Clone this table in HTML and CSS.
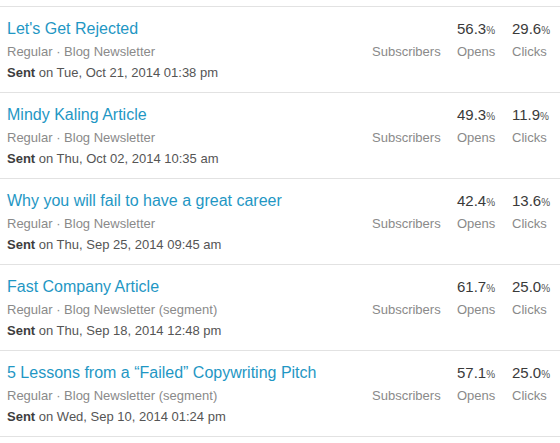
FILE: index.html
```html
<!DOCTYPE html>
<html>
<head>
<meta charset="utf-8">
<link rel="stylesheet" href="styles.css">
</head>
<body>
<ul class="campaigns">
  <li class="campaign">
    <div class="info">
      <div class="title">Let's Get Rejected</div>
      <div class="meta">Regular · Blog Newsletter</div>
      <div class="sent"><b>Sent</b> on Tue, Oct 21, 2014 01:38 pm</div>
    </div>
    <div class="stats">
      <div class="stat"><div class="num">&nbsp;</div><div class="label">Subscribers</div></div>
      <div class="stat"><div class="num">56.3<span class="pct">%</span></div><div class="label">Opens</div></div>
      <div class="stat"><div class="num">29.6<span class="pct">%</span></div><div class="label">Clicks</div></div>
    </div>
  </li>
  <li class="campaign">
    <div class="info">
      <div class="title">Mindy Kaling Article</div>
      <div class="meta">Regular · Blog Newsletter</div>
      <div class="sent"><b>Sent</b> on Thu, Oct 02, 2014 10:35 am</div>
    </div>
    <div class="stats">
      <div class="stat"><div class="num">&nbsp;</div><div class="label">Subscribers</div></div>
      <div class="stat"><div class="num">49.3<span class="pct">%</span></div><div class="label">Opens</div></div>
      <div class="stat"><div class="num">11.9<span class="pct">%</span></div><div class="label">Clicks</div></div>
    </div>
  </li>
  <li class="campaign">
    <div class="info">
      <div class="title">Why you will fail to have a great career</div>
      <div class="meta">Regular · Blog Newsletter</div>
      <div class="sent"><b>Sent</b> on Thu, Sep 25, 2014 09:45 am</div>
    </div>
    <div class="stats">
      <div class="stat"><div class="num">&nbsp;</div><div class="label">Subscribers</div></div>
      <div class="stat"><div class="num">42.4<span class="pct">%</span></div><div class="label">Opens</div></div>
      <div class="stat"><div class="num">13.6<span class="pct">%</span></div><div class="label">Clicks</div></div>
    </div>
  </li>
  <li class="campaign">
    <div class="info">
      <div class="title">Fast Company Article</div>
      <div class="meta">Regular · Blog Newsletter (segment)</div>
      <div class="sent"><b>Sent</b> on Thu, Sep 18, 2014 12:48 pm</div>
    </div>
    <div class="stats">
      <div class="stat"><div class="num">&nbsp;</div><div class="label">Subscribers</div></div>
      <div class="stat"><div class="num">61.7<span class="pct">%</span></div><div class="label">Opens</div></div>
      <div class="stat"><div class="num">25.0<span class="pct">%</span></div><div class="label">Clicks</div></div>
    </div>
  </li>
  <li class="campaign">
    <div class="info">
      <div class="title">5 Lessons from a “Failed” Copywriting Pitch</div>
      <div class="meta">Regular · Blog Newsletter (segment)</div>
      <div class="sent"><b>Sent</b> on Wed, Sep 10, 2014 01:24 pm</div>
    </div>
    <div class="stats">
      <div class="stat"><div class="num">&nbsp;</div><div class="label">Subscribers</div></div>
      <div class="stat"><div class="num">57.1<span class="pct">%</span></div><div class="label">Opens</div></div>
      <div class="stat"><div class="num">25.0<span class="pct">%</span></div><div class="label">Clicks</div></div>
    </div>
  </li>
</ul>
</body>
</html>
```
FILE: styles.css
```css
html, body {
  margin: 0;
  padding: 0;
  background: #ffffff;
  font-family: "Liberation Sans", Arial, Helvetica, sans-serif;
}

.campaigns {
  list-style: none;
  margin: 6px 0 0 0;
  padding: 0;
}

.campaign {
  display: flex;
  align-items: flex-start;
  border-top: 1px solid #e2e2e2;
  padding: 12px 10px 9px 7px;
}

.campaign:last-child {
  border-bottom: 1px solid #e2e2e2;
}

.info {
  flex: 1;
  min-width: 0;
}

.title {
  font-size: 16px;
  line-height: 20px;
  color: #1f97c4;
  margin-bottom: 2px;
  white-space: nowrap;
}

.meta {
  font-size: 13px;
  line-height: 21px;
  color: #8a8a8a;
}

.sent {
  font-size: 13px;
  line-height: 21px;
  color: #555555;
}

.sent b {
  color: #3d3d3d;
  font-weight: bold;
}

.stats {
  display: grid;
  grid-template-columns: 69px 39px 38px;
  column-gap: 16px;
}

.num {
  font-size: 15px;
  line-height: 20px;
  height: 20px;
  color: #3a3a3a;
  margin-bottom: 2px;
  white-space: nowrap;
}

.pct {
  font-size: 10px;
  line-height: 0;
  color: #555555;
}

.label {
  font-size: 13px;
  line-height: 21px;
  color: #8a8a8a;
  white-space: nowrap;
}
```
